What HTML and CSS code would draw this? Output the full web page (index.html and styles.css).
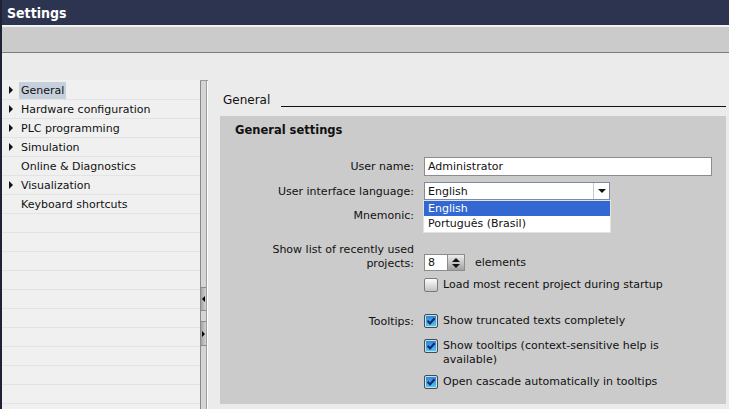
FILE: index.html
```html
<!DOCTYPE html>
<html>
<head>
<meta charset="utf-8">
<title>Settings</title>
<link rel="stylesheet" href="styles.css">
</head>
<body>
<div class="window">
  <header class="titlebar"><span>Settings</span></header>
  <div class="toolbar"></div>
  <div class="main">
    <nav class="tree">
      <div class="row"><span class="arrow"></span><span class="label sel">General</span></div>
      <div class="row"><span class="arrow"></span><span class="label">Hardware configuration</span></div>
      <div class="row"><span class="arrow"></span><span class="label">PLC programming</span></div>
      <div class="row"><span class="arrow"></span><span class="label">Simulation</span></div>
      <div class="row"><span class="arrow none"></span><span class="label">Online &amp; Diagnostics</span></div>
      <div class="row"><span class="arrow"></span><span class="label">Visualization</span></div>
      <div class="row"><span class="arrow none"></span><span class="label">Keyboard shortcuts</span></div>
      <div class="row"></div>
      <div class="row"></div>
      <div class="row"></div>
      <div class="row"></div>
      <div class="row"></div>
      <div class="row"></div>
      <div class="row"></div>
      <div class="row"></div>
      <div class="row"></div>
      <div class="row"></div>
    </nav>
    <div class="splitter">
      <div class="split-btn left"></div>
      <div class="split-btn right"></div>
    </div>
    <section class="content">
      <div class="section-head"><span class="head-title">General</span><span class="rule"></span></div>
      <div class="panel">
        <h2 class="panel-title">General settings</h2>

        <div class="frow r-user">
          <div class="flabel">User name:</div>
          <div class="fctl"><div class="text-input">Administrator</div></div>
        </div>

        <div class="frow r-lang">
          <div class="flabel">User interface language:</div>
          <div class="fctl">
            <div class="combo">
              <div class="combo-val">English</div>
              <div class="combo-btn"><span class="down"></span></div>
              <div class="dropdown">
                <div class="dd-item active">English</div>
                <div class="dd-item">Português (Brasil)</div>
              </div>
            </div>
          </div>
        </div>

        <div class="frow r-mnem">
          <div class="flabel">Mnemonic:</div>
          <div class="fctl"></div>
        </div>

        <div class="frow r-recent">
          <div class="flabel two">Show list of recently used projects:</div>
          <div class="fctl spin-cell">
            <div class="spin">
              <div class="spin-val">8</div>
              <div class="spin-btn"><span class="up"></span><span class="down"></span></div>
            </div>
            <span class="spin-unit">elements</span>
          </div>
        </div>

        <div class="frow r-load">
          <div class="flabel"></div>
          <div class="cb-row"><span class="cb"></span><span class="cb-text">Load most recent project during startup</span></div>
        </div>

        <div class="frow r-tip1">
          <div class="flabel tip">Tooltips:</div>
          <div class="cb-row"><span class="cb checked"><svg viewBox="0 0 12 12" width="12" height="12"><path d="M2.6 5.8 L5 8.4 L9.6 3.2" fill="none" stroke="#142a66" stroke-width="2.1"/></svg></span><span class="cb-text">Show truncated texts completely</span></div>
        </div>

        <div class="frow r-tip2">
          <div class="flabel"></div>
          <div class="cb-row"><span class="cb checked"><svg viewBox="0 0 12 12" width="12" height="12"><path d="M2.6 5.8 L5 8.4 L9.6 3.2" fill="none" stroke="#142a66" stroke-width="2.1"/></svg></span><span class="cb-text">Show tooltips (context-sensitive help is available)</span></div>
        </div>

        <div class="frow r-tip3">
          <div class="flabel"></div>
          <div class="cb-row"><span class="cb checked"><svg viewBox="0 0 12 12" width="12" height="12"><path d="M2.6 5.8 L5 8.4 L9.6 3.2" fill="none" stroke="#142a66" stroke-width="2.1"/></svg></span><span class="cb-text">Open cascade automatically in tooltips</span></div>
        </div>
      </div>
    </section>
  </div>
</div>
</body>
</html>
```

FILE: styles.css
```css
html, body {
  margin: 0;
  padding: 0;
}
body {
  font-family: "DejaVu Sans", "Liberation Sans", sans-serif;
  font-size: 11px;
  color: #111;
  background: #ebebeb;
}
.window {
  width: 729px;
  height: 409px;
  box-sizing: border-box;
  border-left: 2px solid #1d2334;
  display: flex;
  flex-direction: column;
  overflow: hidden;
  background: #ebebeb;
}
.titlebar {
  height: 24px;
  padding-top: 1px;
  background: #2c3450;
  border-bottom: 2px solid #f2f2f2;
  color: #fff;
  font-family: "DejaVu Sans Condensed", "DejaVu Sans", sans-serif;
  font-stretch: condensed;
  font-weight: bold;
  font-size: 14px;
  line-height: 24px;
  padding-left: 5px;
  flex: none;
}
.toolbar {
  height: 25px;
  background: #cbcbcb;
  border-bottom: 1px solid #7d7d7d;
  flex: none;
}
.main {
  flex: 1;
  min-height: 0;
  display: flex;
  padding-top: 27px;
}

/* tree */
.tree {
  width: 198px;
  flex: none;
  background: #f0f0f0;
  overflow: hidden;
  padding-top: 1px;
}
.row {
  height: 18px;
  border-bottom: 1px solid #e3e3e3;
  display: flex;
  align-items: center;
  padding-left: 7px;
}
.arrow {
  width: 0;
  height: 0;
  border-left: 4px solid #111;
  border-top: 4px solid transparent;
  border-bottom: 4px solid transparent;
  margin-right: 6px;
  flex: none;
}
.arrow.none {
  visibility: hidden;
}
.label {
  padding: 0 2px;
  line-height: 17px;
  white-space: nowrap;
}
.label.sel {
  background: #c6d0dc;
}

/* splitter */
.splitter {
  width: 8px;
  flex: none;
  box-sizing: border-box;
  border-top: 1px solid #9a9a9a;
  background: linear-gradient(to right, #8a8a8a 0 1px, #d5d5d5 1px 6px, #9c9c9c 6px 7px, #ffffff 7px 8px);
  padding-top: 206px;
  display: flex;
  flex-direction: column;
}
.split-btn {
  margin-left: 1px;
  width: 5px;
  height: 22px;
  border-top: 1px solid #8a8a8a;
  border-bottom: 1px solid #8a8a8a;
  background: linear-gradient(to right, #a4a4a4, #d2d2d2);
  display: flex;
  align-items: center;
}
.split-btn.right {
  margin-top: 10px;
  height: 23px;
}
.split-btn.left::after {
  content: "";
  margin-left: 1px;
  border-right: 3px solid #000;
  border-top: 3px solid transparent;
  border-bottom: 3px solid transparent;
}
.split-btn.right::after {
  content: "";
  margin-left: 1px;
  border-left: 3px solid #000;
  border-top: 3px solid transparent;
  border-bottom: 3px solid transparent;
}

/* content */
.content {
  flex: 1;
  min-width: 0;
  display: flex;
  flex-direction: column;
}
.section-head {
  height: 27px;
  flex: none;
  display: flex;
  align-items: flex-end;
  padding-left: 15px;
  margin-right: 3px;
}
.head-title {
  font-size: 12px;
  line-height: 14px;
}
.rule {
  flex: 1;
  height: 0;
  border-bottom: 1px solid #111;
  margin-left: 11px;
}
.panel {
  flex: 1;
  margin: 9px 3px 5px 12px;
  background: #cbcbcb;
  padding: 7px 0 0 15px;
}
.panel-title {
  margin: 0;
  font-size: 11.5px;
  line-height: 15px;
  font-weight: bold;
}

/* form */
.frow {
  display: grid;
  grid-template-columns: 179px auto;
  column-gap: 10px;
}
.flabel {
  text-align: right;
}
.r-user { margin-top: 19px; line-height: 19px; }
.r-user .flabel { padding-top: 1px; line-height: 18px; }
.r-lang { margin-top: 6px; line-height: 18px; }
.r-lang .flabel { padding-top: 1px; line-height: 17px; }
.r-mnem { margin-top: 6px; line-height: 19px; height: 19px; }
.r-recent { margin-top: 18px; line-height: 14px; }
.r-load { margin-top: 7px; }
.r-tip1 { margin-top: 22px; }
.r-tip2 { margin-top: 10px; }
.r-tip3 { margin-top: 8px; }
.flabel.tip {
  line-height: 14px;
  padding-top: 1px;
}

.text-input {
  width: 288px;
  height: 19px;
  box-sizing: border-box;
  border: 1px solid #8c8c8c;
  background: #fff;
  padding: 1px 0 0 3px;
  line-height: 16px;
}
.combo {
  position: relative;
  width: 186px;
  height: 18px;
  box-sizing: border-box;
  border: 1px solid #7d8aa0;
  background: #fff;
  display: flex;
}
.combo-val {
  flex: 1;
  padding: 1px 0 0 3px;
  line-height: 15px;
  border-right: 1px solid #c8c8c8;
}
.combo-btn {
  width: 15px;
  display: flex;
  align-items: center;
  justify-content: center;
}
.down {
  width: 0;
  height: 0;
  border-top: 4px solid #111;
  border-left: 4px solid transparent;
  border-right: 4px solid transparent;
}
.up {
  width: 0;
  height: 0;
  border-bottom: 4px solid #111;
  border-left: 4px solid transparent;
  border-right: 4px solid transparent;
}
.dropdown {
  position: absolute;
  left: -1px;
  top: 18px;
  width: 186px;
  background: #fff;
  box-shadow: 0 0 0 1px #e2e2e2;
  z-index: 5;
  padding-bottom: 1px;
}
.dd-item {
  line-height: 15px;
  padding-left: 4px;
  white-space: nowrap;
}
.dd-item.active {
  background: #3367d2;
  color: #fff;
}

.spin-cell {
  display: flex;
  align-items: center;
  align-self: end;
}
.spin {
  display: flex;
  height: 17px;
}
.spin-val {
  width: 24px;
  box-sizing: border-box;
  border: 1px solid #8c8c8c;
  background: #fff;
  padding-left: 3px;
  line-height: 15px;
}
.spin-btn {
  width: 17px;
  box-sizing: border-box;
  border: 1px solid #8c8c8c;
  border-left: 0;
  background: linear-gradient(#ececec, #a2a2a2);
  display: flex;
  flex-direction: column;
  align-items: center;
  justify-content: center;
  gap: 2px;
}
.spin-unit {
  margin-left: 10px;
}

.cb-row {
  display: flex;
  align-items: flex-start;
  gap: 5px;
  line-height: 14px;
}
.cb {
  width: 14px;
  height: 14px;
  flex: none;
  box-sizing: border-box;
  border: 1px solid #7a7a7a;
  border-radius: 2px;
  background: linear-gradient(#fdfdfd, #c2c2c2);
}
.cb.checked {
  border-color: #4a4a4a;
  background: linear-gradient(#2d7ed8, #56cbf2);
  box-shadow: inset 0 0 0 1px #bfe2f6;
  display: flex;
  align-items: center;
  justify-content: center;
}
.cb.checked svg {
  display: block;
}
.cb-text {
  max-width: 230px;
}
```
